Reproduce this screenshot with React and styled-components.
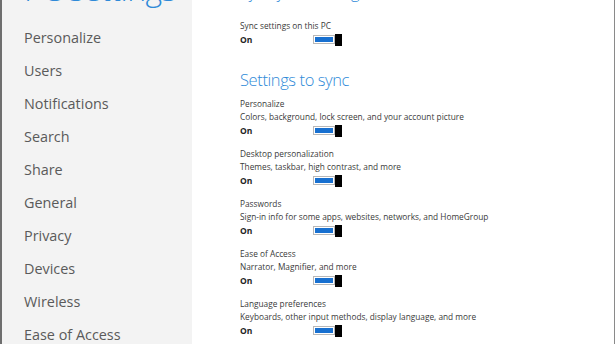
import React from 'react';
import styled, { createGlobalStyle } from 'styled-components';

const GlobalStyle = createGlobalStyle`
  html, body {
    margin: 0;
    padding: 0;
    background: #ffffff;
  }
  body {
    font-family: "Open Sans", "Noto Sans", "DejaVu Sans", sans-serif;
  }
`;

const Page = styled.div`
  display: flex;
  width: 615px;
  height: 344px;
  overflow: hidden;
  box-sizing: border-box;
  border-right: 1px solid #8a8a8a;
  background: #ffffff;
`;

const Sidebar = styled.nav`
  width: 192px;
  flex: none;
  box-sizing: border-box;
  border-left: 2px solid #6e6e6e;
  background: #f3f3f3;
  padding-left: 22px;
`;

const Title = styled.h1`
  margin: -33px 0 0;
  font-size: 32px;
  font-weight: 300;
  letter-spacing: -0.6px;
  line-height: 44px;
  color: #2f8ad8;
  white-space: nowrap;
`;

const NavList = styled.ul`
  list-style: none;
  margin: 10px 0 0;
  padding: 0;
`;

const NavItem = styled.li`
  height: 33px;
  line-height: 33px;
  font-size: 14.4px;
  color: #5a5a5a;
  white-space: nowrap;
`;

const Content = styled.main`
  flex: 1;
  padding-left: 48px;
`;

const Heading = styled.h2`
  margin: ${(p) => (p.first ? '-20px 0 15px' : '21px 0 5px')};
  font-size: 16.5px;
  font-weight: 300;
  letter-spacing: -0.4px;
  line-height: 24px;
  color: #2f8ad8;
  white-space: nowrap;
`;

const Group = styled.section`
  margin-bottom: 9px;
`;

const Label = styled.div`
  font-size: 8.3px;
  line-height: 13px;
  color: #3a3a3a;
  white-space: nowrap;
`;

const Row = styled.div`
  display: flex;
  align-items: center;
  height: 15px;
`;

const State = styled.span`
  width: 73px;
  font-size: 8.5px;
  font-weight: 700;
  color: #222;
`;

const Track = styled.div`
  display: flex;
  align-items: center;
  width: 29px;
  height: 12px;
`;

const Fill = styled.div`
  flex: 1;
  height: 9px;
  box-sizing: border-box;
  border: 1px solid #b8b8b8;
  background: #1870d0;
  box-shadow: inset 0 0 0 1px #ffffff;
`;

const Thumb = styled.div`
  width: 7px;
  height: 12px;
  background: #000;
`;

const Toggle = () => (
  <Track>
    <Fill />
    <Thumb />
  </Track>
);

const nav = [
  'Personalize',
  'Users',
  'Notifications',
  'Search',
  'Share',
  'General',
  'Privacy',
  'Devices',
  'Wireless',
  'Ease of Access',
];

const syncItems = [
  ['Personalize', 'Colors, background, lock screen, and your account picture'],
  ['Desktop personalization', 'Themes, taskbar, high contrast, and more'],
  ['Passwords', 'Sign-in info for some apps, websites, networks, and HomeGroup'],
  ['Ease of Access', 'Narrator, Magnifier, and more'],
  ['Language preferences', 'Keyboards, other input methods, display language, and more'],
];

export default function App() {
  return (
    <>
      <GlobalStyle />
      <Page>
        <Sidebar>
          <Title>PC settings</Title>
          <NavList>
            {nav.map((n) => (
              <NavItem key={n}>{n}</NavItem>
            ))}
          </NavList>
        </Sidebar>
        <Content>
          <Heading first>Sync your settings</Heading>
          <Group>
            <Label>Sync settings on this PC</Label>
            <Row>
              <State>On</State>
              <Toggle />
            </Row>
          </Group>
          <Heading>Settings to sync</Heading>
          {syncItems.map(([t, d]) => (
            <Group key={t}>
              <Label>{t}</Label>
              <Label>{d}</Label>
              <Row>
                <State>On</State>
                <Toggle />
              </Row>
            </Group>
          ))}
        </Content>
      </Page>
    </>
  );
}
